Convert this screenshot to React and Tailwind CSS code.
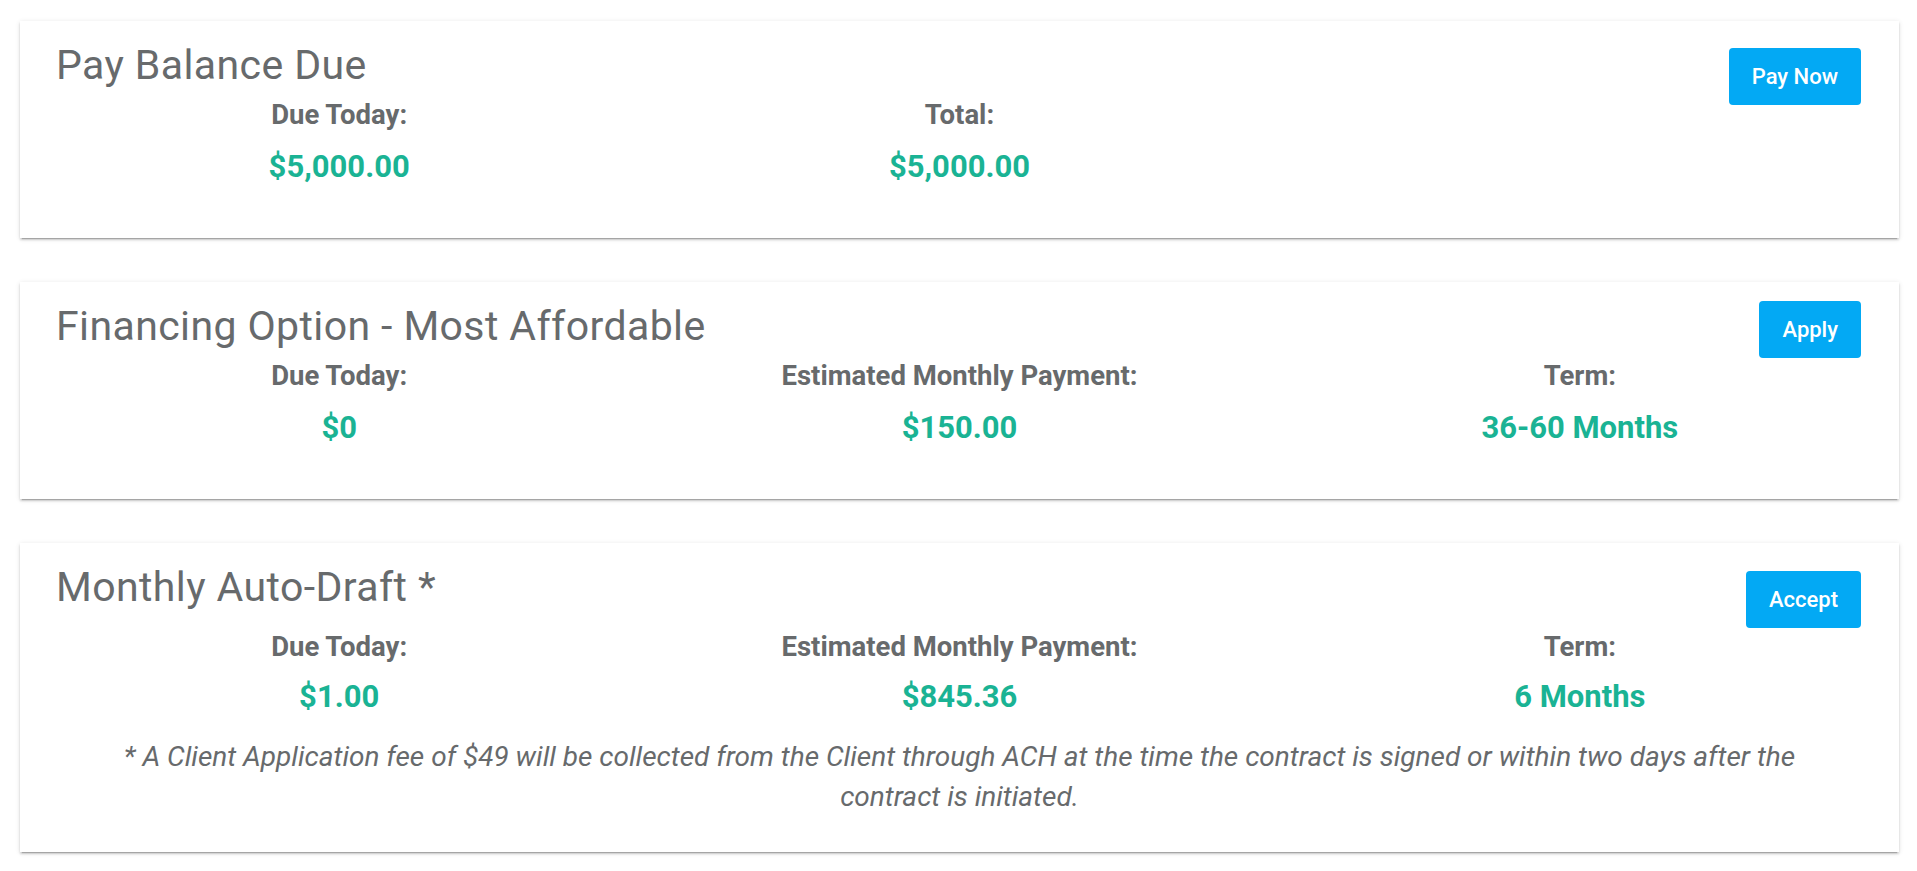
import React from "react";

const font = "font-['Roboto','Liberation_Sans',sans-serif]";

function Col({ label, value, labelMt = "mt-[10px]", valueMt = "mt-[18px]" }) {
  return (
    <div className="flex flex-col items-center">
      <div className={`${labelMt} text-[27.5px] leading-[32px] font-bold text-[#676a6c]`}>{label}</div>
      <div className={`${valueMt} text-[31px] leading-[36px] font-bold text-[#1ab394]`}>{value}</div>
    </div>
  );
}

function Card({ title, button, btnMt, cols, labelMt, valueMt, pb, children }) {
  return (
    <div
      className={`bg-white px-[9px] pt-[20px] ${pb} shadow-[0_3px_1px_-2px_rgba(0,0,0,0.2),0_2px_2px_0_rgba(0,0,0,0.14),0_1px_5px_0_rgba(0,0,0,0.12)]`}
    >
      <div className="flex justify-between items-start h-[48px] pl-[27px] pr-[29px]">
        <h2 className="text-[41px] leading-[48px] font-normal tracking-[0.4px] text-[#676a6c]">{title}</h2>
        <button
          className={`${btnMt} bg-[#03a9f4] text-white text-[22px] leading-[33px] font-medium px-[23px] py-[12px] rounded-[4px]`}
        >
          {button}
        </button>
      </div>
      <div className="grid grid-cols-3">
        {cols.map((c, i) =>
          c ? (
            <Col key={i} label={c[0]} value={c[1]} labelMt={labelMt} valueMt={valueMt} />
          ) : (
            <div key={i} />
          )
        )}
      </div>
      {children}
    </div>
  );
}

export default function App() {
  return (
    <div className={`${font} bg-white min-h-[871px] pl-[20px] pr-[18px] pt-[21px] flex flex-col gap-[44px]`}>
      <Card
        title="Pay Balance Due"
        button="Pay Now"
        btnMt="mt-[7px]"
        cols={[["Due Today:", "$5,000.00"], ["Total:", "$5,000.00"], null]}
        labelMt="mt-[10px]"
        valueMt="mt-[18px]"
        pb="pb-[53px]"
      />
      <Card
        title="Financing Option - Most Affordable"
        button="Apply"
        btnMt="mt-[-1px]"
        cols={[
          ["Due Today:", "$0"],
          ["Estimated Monthly Payment:", "$150.00"],
          ["Term:", "36-60 Months"],
        ]}
        labelMt="mt-[10px]"
        valueMt="mt-[18px]"
        pb="pb-[53px]"
      />
      <Card
        title="Monthly Auto-Draft *"
        button="Accept"
        btnMt="mt-[8px]"
        cols={[
          ["Due Today:", "$1.00"],
          ["Estimated Monthly Payment:", "$845.36"],
          ["Term:", "6 Months"],
        ]}
        labelMt="mt-[20px]"
        valueMt="mt-[16px]"
        pb="pb-[35px]"
      >
        <p className="mt-[22px] px-[80px] text-center italic text-[28px] leading-[40px] text-[#676a6c]">
          * A Client Application fee of $49 will be collected from the Client through ACH at the time the contract is
          signed or within two days after the contract is initiated.
        </p>
      </Card>
    </div>
  );
}
